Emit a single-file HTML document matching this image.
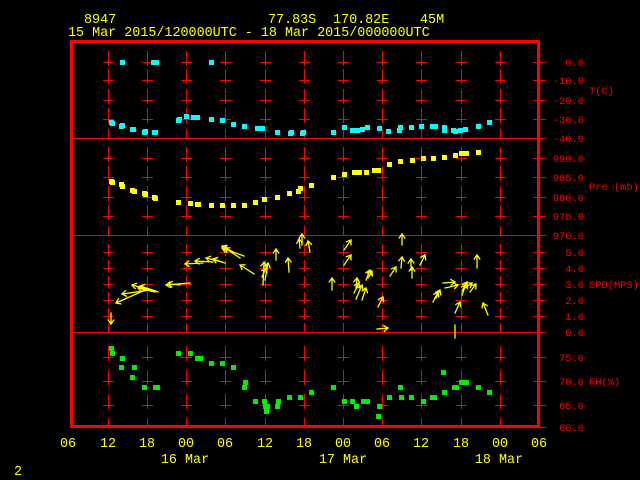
<!DOCTYPE html>
<html><head><meta charset="utf-8"><style>
html,body{margin:0;padding:0;background:#000;width:640px;height:480px;overflow:hidden}
svg{display:block}
text{font-family:"Liberation Mono",monospace}
</style></head><body>
<svg id="s" width="640" height="480" xmlns="http://www.w3.org/2000/svg">
<rect width="640" height="480" fill="#000"/>
<g fill="#ffff00" font-size="13.4">
<text x="84" y="23">8947</text>
<text x="268" y="23">77.83S</text>
<text x="333" y="23">170.82E</text>
<text x="420" y="23">45M</text>
<text x="68" y="36">15 Mar 2015/120000UTC - 18 Mar 2015/000000UTC</text>
<g text-anchor="middle">
<text x="68" y="447">06</text><text x="108" y="447">12</text><text x="147" y="447">18</text><text x="186" y="447">00</text><text x="225" y="447">06</text><text x="265" y="447">12</text><text x="304" y="447">18</text><text x="343" y="447">00</text><text x="382" y="447">06</text><text x="421" y="447">12</text><text x="461" y="447">18</text><text x="500" y="447">00</text><text x="539" y="447">06</text>
<text x="185" y="463">16 Mar</text><text x="343" y="463">17 Mar</text><text x="499" y="463">18 Mar</text>
</g>
<text x="14" y="475">2</text>
</g>
<g id="grid" stroke="#ff0000" stroke-width="1" fill="none"></g>
<g fill="#ff0000" font-size="10.4" text-anchor="end">
<text x="584" y="66">0.0</text><text x="584" y="84">-10.0</text><text x="584" y="104">-20.0</text><text x="584" y="123">-30.0</text><text x="584" y="142">-40.0</text>
<text x="584" y="162">990.0</text><text x="584" y="181">985.0</text><text x="584" y="201">980.0</text><text x="584" y="220">975.0</text><text x="584" y="239">970.0</text>
<text x="584" y="256">5.0</text><text x="584" y="272">4.0</text><text x="584" y="288">3.0</text><text x="584" y="304">2.0</text><text x="584" y="320">1.0</text><text x="584" y="336">0.0</text>
<text x="584" y="361">75.0</text><text x="584" y="385">70.0</text><text x="584" y="409">65.0</text><text x="584" y="431">60.0</text>
</g>
<g fill="#ff0000" font-size="10.4">
<text x="589" y="94">T(C)</text><text x="589" y="190">Pre (mb)</text><text x="589" y="288">SPD(MPS)</text><text x="589" y="385">RH(%)</text>
</g>
<g id="pts"></g>
<g id="arr" stroke="#ffff00" stroke-width="1.3" fill="none" stroke-linecap="square"></g>
</svg>
<script>
var NS="http://www.w3.org/2000/svg";
function el(p,t,a){var e=document.createElementNS(NS,t);for(var k in a)e.setAttribute(k,a[k]);p.appendChild(e);return e;}
var g=document.getElementById('grid');
var xs=[108,147,186,225,265,304,343,382,421,461,500];
var panels=[[62,80,100,119],[158,177,197,216],[252,268,284,300,316],[357,381,405]];
var bottoms=[138,235,332,427];
panels.forEach(function(ts,i){
  xs.forEach(function(x){
    ts.forEach(function(t,j){
      var up=(i==2)?8:11;
      el(g,'line',{x1:x+.5,y1:t-up,x2:x+.5,y2:t+4});
      el(g,'line',{x1:x-5,y1:t+.5,x2:x+6,y2:t+.5});
    });
    el(g,'line',{x1:x+.5,y1:bottoms[i]-9,x2:x+.5,y2:bottoms[i]});
  });
  ts.forEach(function(t){el(g,'line',{x1:533,y1:t+.5,x2:546,y2:t+.5});});
  el(g,'line',{x1:533,y1:bottoms[i]+.5,x2:546,y2:bottoms[i]+.5});
});
el(g,'line',{x1:71,y1:138.5,x2:539,y2:138.5});
el(g,'line',{x1:71,y1:235.5,x2:539,y2:235.5});
el(g,'line',{x1:71,y1:332.5,x2:539,y2:332.5});
el(g,'rect',{x:71.5,y:41.5,width:467,height:385,'stroke-width':3});
var p=document.getElementById('pts');
function sq(list,c){list.forEach(function(q){el(p,'rect',{x:q[0]-2,y:q[1]-2,width:5,height:5,fill:c});});}
sq([[122,62],[153,62],[156,62],[211,62],[111,122],[112,123],[121,126],[122,125],[132,129],[133,129],[144,132],[145,131],[154,132],[155,132],[178,120],[179,119],[186,116],[193,117],[197,117],[211,119],[222,120],[233,124],[244,126],[257,128],[262,128],[277,132],[290,133],[291,132],[302,133],[303,132],[333,132],[344,127],[352,130],[357,130],[362,129],[367,127],[379,128],[388,131],[399,130],[400,127],[411,127],[421,126],[432,126],[435,126],[444,127],[444,130],[453,130],[455,131],[460,130],[465,129],[478,126],[489,122]],'#00ffff');
sq([[111,181],[112,182],[121,184],[122,186],[132,190],[134,191],[144,193],[145,194],[154,197],[155,198],[178,202],[190,203],[197,204],[198,204],[211,205],[222,205],[233,205],[244,205],[255,202],[264,199],[277,197],[289,193],[298,191],[300,188],[311,185],[333,177],[344,174],[354,172],[359,172],[366,172],[374,170],[378,170],[389,164],[400,161],[412,160],[423,158],[433,158],[444,157],[455,155],[461,153],[466,153],[478,152]],'#ffff00');
sq([[111,348],[112,353],[122,358],[121,367],[134,367],[132,377],[144,387],[155,387],[157,387],[178,353],[190,353],[197,358],[200,358],[211,363],[222,363],[233,367],[245,382],[244,387],[255,401],[264,401],[265,406],[267,406],[266,411],[278,401],[277,406],[289,397],[300,397],[311,392],[333,387],[344,401],[352,401],[356,406],[363,401],[367,401],[379,406],[378,416],[389,397],[400,387],[401,397],[411,397],[423,401],[432,397],[434,397],[443,372],[444,392],[454,387],[456,387],[461,382],[466,382],[478,387],[489,392]],'#00ee00');
var a=document.getElementById('arr');
var A=[[111,313,111,324],[145,290,116,303],[150,290,122,294],[158,292,132,285],[155,292,138,288],[156,291,140,286],[190,283,166,285],[180,285,168,284],[203,263,185,264],[213,262,195,261],[222,262,206,258],[225,263,213,259],[244,256,222,248],[240,258,225,248],[233,252,222,246],[254,274,240,265],[263,285,264,262],[265,280,268,263],[262,277,266,268],[276,260,276,249],[289,272,288,258],[300,248,299,239],[302,245,302,234],[310,252,308,241],[344,250,351,240],[344,265,351,255],[332,290,332,278],[356,299,362,285],[356,288,357,278],[362,300,366,288],[366,280,370,270],[368,278,372,271],[354,293,359,283],[378,307,383,297],[390,276,396,267],[401,268,402,257],[411,270,411,259],[412,278,412,267],[420,265,425,255],[402,245,402,234],[433,302,438,292],[436,298,440,290],[443,283,455,282],[445,288,458,285],[462,291,467,282],[462,295,466,284],[470,292,476,284],[465,288,472,283],[477,268,477,255],[455,313,460,302],[488,315,483,303],[377,329,388,328]];
A.forEach(function(q){
  var dx=q[2]-q[0],dy=q[3]-q[1],L=Math.sqrt(dx*dx+dy*dy),ux=dx/L,uy=dy/L,h=4;
  var d='M'+q[0]+' '+q[1]+'L'+q[2]+' '+q[3]+'M'+(q[2]-h*ux-h*0.7*uy).toFixed(1)+' '+(q[3]-h*uy+h*0.7*ux).toFixed(1)+'L'+q[2]+' '+q[3]+'L'+(q[2]-h*ux+h*0.7*uy).toFixed(1)+' '+(q[3]-h*uy-h*0.7*ux).toFixed(1);
  el(a,'path',{d:d});
});
el(a,'line',{x1:455,y1:325,x2:455,y2:338});
</script>
</body></html>
